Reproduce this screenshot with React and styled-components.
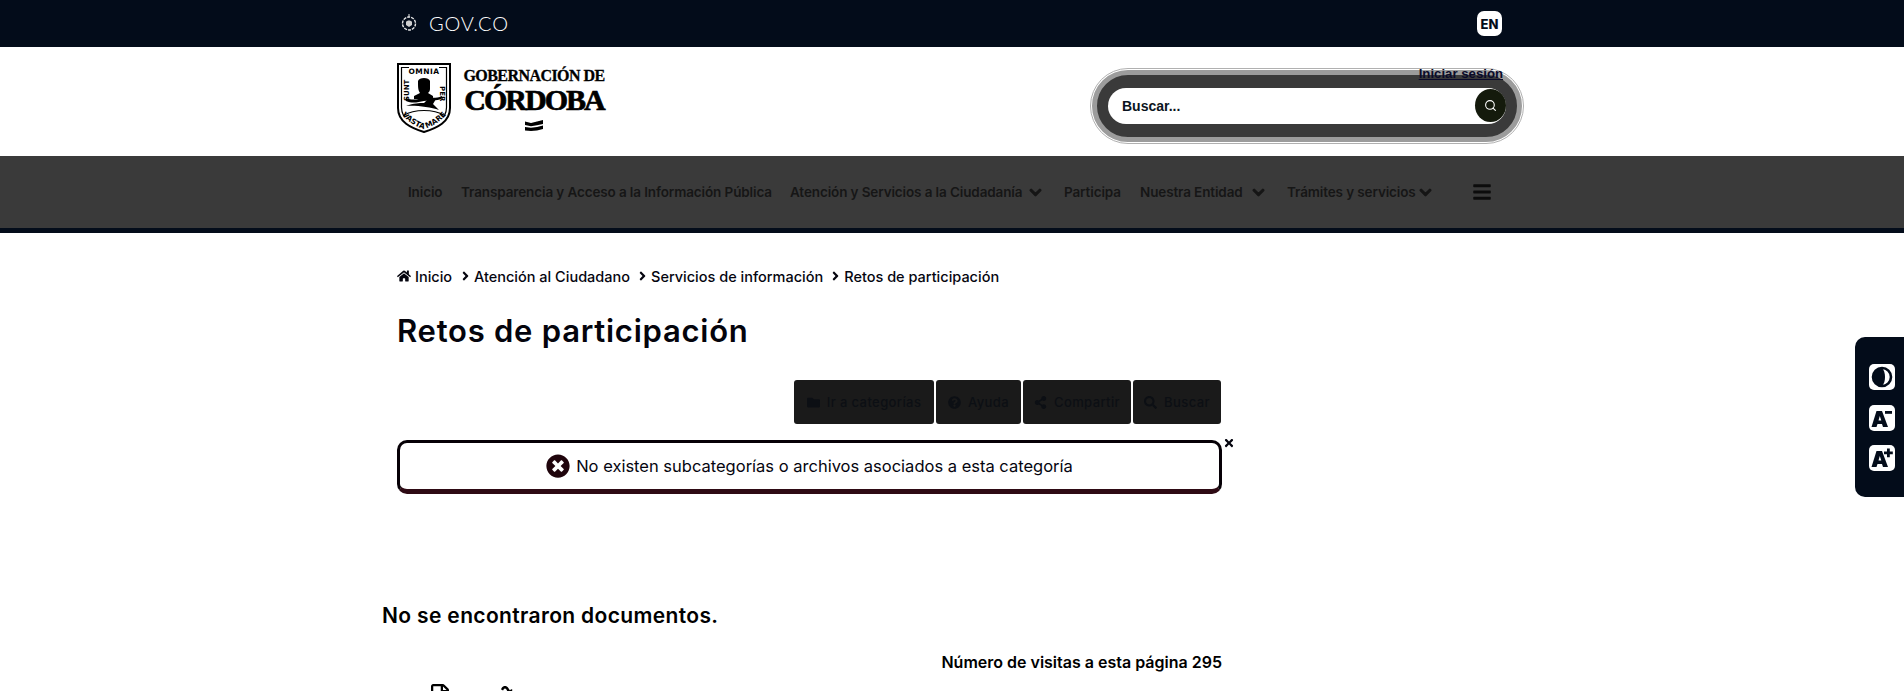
import styled, { createGlobalStyle } from "styled-components"
import { FaChevronDown, FaBars, FaHome, FaFolder, FaQuestionCircle, FaShareAlt, FaSearch, FaTimes, FaTimesCircle, FaRegFile, FaRecycle, FaAngleRight } from "react-icons/fa"
import { FiSearch } from "react-icons/fi"

const NavItems = [
    { label: "Inicio", w: 35 },
    { label: "Transparencia y Acceso a la Información Pública", w: 311 },
    { label: "Atención y Servicios a la Ciudadanía", w: 233, caret: true },
    { label: "Participa", w: 58 },
    { label: "Nuestra Entidad", w: 106, caret: true },
    { label: "Trámites y servicios", w: 126, caret: true },
]

const Crumbs = ["Atención al Ciudadano", "Servicios de información", "Retos de participación"]

const Actions = [
    { label: "Ir a categorías", icon: <FaFolder />, w: 140 },
    { label: "Ayuda", icon: <FaQuestionCircle />, w: 85 },
    { label: "Compartir", icon: <FaShareAlt />, w: 108 },
    { label: "Buscar", icon: <FaSearch />, w: 88 },
]

export default function App() {
    return (
        <>
            <GlobalStyle />
            <TopBar>
                <Wrap>
                    <GovLogo>
                        <svg width="16" height="18" viewBox="0 0 16 18" fill="none" stroke="#e8e8e8">
                            <circle cx="8" cy="9.5" r="6.5" strokeWidth="1.4" strokeDasharray="3 1" />
                            <path d="M5 8c1-2 5-2 6 0v3l-3 2-3-2z" fill="#cfcfcf" stroke="none" />
                            <path d="M8 0v3" strokeWidth="1" />
                        </svg>
                        <GovText>GOV.CO</GovText>
                    </GovLogo>
                    <LangButton>EN</LangButton>
                </Wrap>
            </TopBar>

            <Header>
                <Wrap>
                    <Brand>
                        <Shield />
                        <BrandText>
                            <BrandSmall>GOBERNACIÓN DE</BrandSmall>
                            <BrandBig>CÓRDOBA</BrandBig>
                            <BrandWave viewBox="0 0 18 11">
                                <path d="M0 1.500 L6 3 L12 1.500 L18 0 V4 L12 5.200 L6 6.200 L0 5 Z" />
                                <path d="M0 7 L6 7.800 L12 7 L18 5.600 V9 L12 10.400 L6 11 L0 10.400 Z" />
                            </BrandWave>
                        </BrandText>
                    </Brand>
                    <SearchArea>
                        <LoginLink>Iniciar sesión</LoginLink>
                        <SearchPill>
                            <SearchField>
                                <span>Buscar...</span>
                                <SearchButton><FiSearch /></SearchButton>
                            </SearchField>
                        </SearchPill>
                    </SearchArea>
                </Wrap>
            </Header>

            <Nav>
                <NavInner>
                    {NavItems.map((n, i) =>
                        <NavItem key={i} $caret={n.caret}>
                            <NavLabel $w={n.w}>{n.label}</NavLabel>
                            {n.caret && <FaChevronDown />}
                        </NavItem>)}
                    <Burger><FaBars /></Burger>
                </NavInner>
            </Nav>

            <Main>
                <Breadcrumb>
                    <FaHome />
                    <CrumbHome>Inicio</CrumbHome>
                    {Crumbs.map((c, i) =>
                        <Crumb key={i}>
                            <FaAngleRight />
                            {c}
                        </Crumb>)}
                </Breadcrumb>
                <Title>Retos de participación</Title>
                <Column>
                    <ActionRow>
                        {Actions.map((a, i) =>
                            <ActionButton key={i} $w={a.w}>{a.icon}{a.label}</ActionButton>)}
                    </ActionRow>
                    <Alert>
                        <AlertIcon><FaTimesCircle /></AlertIcon>
                        No existen subcategorías o archivos asociados a esta categoría
                        <AlertClose><FaTimes /></AlertClose>
                    </Alert>
                </Column>
                <Empty>No se encontraron documentos.</Empty>
                <Visits>Número de visitas a esta página 295</Visits>
                <FootIcons>
                    <FaRegFile />
                    <FaRecycle />
                </FootIcons>
            </Main>

            <SideRail>
                <RailButton>
                    <svg width="22" height="22" viewBox="0 0 22 22">
                        <circle cx="11" cy="11" r="9" fill="none" stroke="#030c1a" strokeWidth="2.600" />
                        <path d="M11 2a9 9 0 0 0 0 18c2-2 3-5 3-9s-1-7-3-9z" fill="#030c1a" />
                    </svg>
                </RailButton>
                <RailButton>
                    <svg width="24" height="22" viewBox="0 0 24 22" fill="#030c1a">
                        <path d="M6.500 4h5.500l6 16h-5l-1-3H7.500l-1 3H1.500zM8.500 13.500h2.800L9.800 9z" />
                        <rect x="15" y="4" width="7" height="2.800" />
                    </svg>
                </RailButton>
                <RailButton>
                    <svg width="24" height="22" viewBox="0 0 24 22" fill="#030c1a">
                        <path d="M6.500 4h5.500l6 16h-5l-1-3H7.500l-1 3H1.500zM8.500 13.500h2.800L9.800 9z" />
                        <path d="M17 1.500h2.800v3h3v2.800h-3v3H17v-3h-3V4.500h3z" />
                    </svg>
                </RailButton>
            </SideRail>
        </>
    )
}

function Shield() {
    return (
        <ShieldSvg viewBox="0 0 54 70">
            <path d="M1 1h52v44c0 14-13 20-26 24C14 65 1 59 1 45z" fill="#fff" stroke="#000" strokeWidth="2" />
            <path d="M4.500 4.500h45v40c0 3-1 6-2 8-5-3-12-5-20.500-5S11.500 49.500 6.500 52.500c-1-2-2-5-2-8z" fill="#fff" stroke="#000" strokeWidth="1.200" />
            <rect x="12" y="3" width="30" height="10" fill="#fff" />
            <text x="27" y="10.500" fontFamily="'DejaVu Sans', sans-serif" fontWeight="700" fontSize="7.500" letterSpacing="0.5" textAnchor="middle">OMNIA</text>
            <text x="0" y="0" transform="translate(11.500 38) rotate(-90)" fontFamily="'DejaVu Sans', sans-serif" fontWeight="700" fontSize="7">SUNT</text>
            <text x="0" y="0" transform="translate(42.500 23) rotate(90)" fontFamily="'DejaVu Sans', sans-serif" fontWeight="700" fontSize="7">PER</text>
            <path d="M21 18c1-4 11-4 12 0v8c0 2-1 3-2 4l5 3v3H17v-3l6-3c-2-3-2-6-2-12z" />
            <path d="M9 35c7 3 12 1 18 0s12 1 18-2v2.500c-6 3-12 1.500-18 2.500s-11 3-18 0z" />
            <path d="M9 43c8-3 13-3 18-3l5-5 7 1-3 5 6 6c-9-3-24-5-33-4z" />
            <path id="shield-arc" d="M4 51C12 60 20 64 27 66 34 64 42 60 50 51" fill="none" />
            <text fontFamily="'DejaVu Sans', sans-serif" fontWeight="700" fontSize="7.500">
                <textPath href="#shield-arc" startOffset="50%" textAnchor="middle">VASTA MARE</textPath>
            </text>
        </ShieldSvg>
    )
}

const GlobalStyle = createGlobalStyle`
    html, body { margin: 0; padding: 0; background: #fff; overflow: hidden; }
    body { font-family: "Inter", "Liberation Sans", sans-serif; color: #000; height: 691px; }
    * { box-sizing: border-box; }
`

const Wrap = styled.div`
    width: 1140px;
    margin: 0 auto;
    padding: 0 15px;
    display: flex;
    align-items: center;
    justify-content: space-between;
    position: relative;
    height: 100%;
`

const TopBar = styled.div`
    height: 47px;
    background: #030c1a;
`

const GovLogo = styled.div`
    display: flex;
    align-items: center;
    gap: 12px;
    padding: 0 0 2px 4px;
`

const GovText = styled.span`
    font-family: "Lato", sans-serif;
    font-weight: 300;
    font-size: 20px;
    letter-spacing: 0.8px;
    color: #fff;
`

const LangButton = styled.div`
    width: 25px;
    height: 25px;
    margin-right: 5px;
    background: #fff;
    border-radius: 7px;
    display: flex;
    align-items: center;
    justify-content: center;
    font-size: 13px;
    font-weight: 800;
    color: #030c1a;
`

const Header = styled.div`
    height: 109px;
    background: #fff;
`

const Brand = styled.div`
    display: flex;
    gap: 13px;
    align-self: flex-start;
    padding-top: 16px;
`

const ShieldSvg = styled.svg`
    width: 54px;
    height: 70px;
    display: block;
`

const BrandText = styled.div`
    width: 140px;
    display: flex;
    flex-direction: column;
    align-items: center;
    padding-top: 5px;
`

const BrandSmall = styled.div`
    font-family: "Liberation Serif", serif;
    font-weight: 700;
    font-size: 16px;
    line-height: 16px;
    letter-spacing: -0.55px;
    white-space: nowrap;
    -webkit-text-stroke: 0.3px #000;
`

const BrandBig = styled.div`
    font-family: "Liberation Serif", serif;
    font-weight: 700;
    font-size: 30px;
    line-height: 32px;
    letter-spacing: -2px;
    white-space: nowrap;
    -webkit-text-stroke: 0.7px #000;
`

const BrandWave = styled.svg`
    width: 18px;
    height: 11px;
    margin-top: 4px;
`

const SearchArea = styled.div`
    position: relative;
    margin-right: -15px;
    margin-top: 8px;
`

const LoginLink = styled.a`
    position: absolute;
    top: -4px;
    right: 19px;
    z-index: 1;
    font-family: "Liberation Sans", sans-serif;
    font-size: 13.2px;
    font-weight: 700;
    color: #0a0a2a;
    text-decoration: underline;
`

const SearchPill = styled.div`
    width: 430px;
    height: 72px;
    border-radius: 36px;
    background: #3a3a3a;
    border: 5px solid #9c9c9c;
    outline: 1px solid #b0b0b0;
    outline-offset: 1px;
    display: flex;
    align-items: center;
    padding: 0 11px;
`

const SearchField = styled.div`
    flex: 1;
    height: 36px;
    border-radius: 18px;
    background: #fff;
    display: flex;
    align-items: center;
    justify-content: space-between;
    padding-left: 14px;
    font-family: "Liberation Sans", sans-serif;
    font-size: 14px;
    font-weight: 700;
    color: #0b1420;
`

const SearchButton = styled.div`
    width: 31px;
    height: 33px;
    border-radius: 50%;
    background: #141a0c;
    color: #fff;
    font-size: 13px;
    display: flex;
    align-items: center;
    justify-content: center;
`

const Nav = styled.div`
    height: 77px;
    background: #3a3a3a;
    border-bottom: 5px solid #030c1a;
`

const NavInner = styled.div`
    width: 1140px;
    height: 100%;
    margin: 0 auto;
    padding-left: 26px;
    display: flex;
    align-items: center;
    gap: 18px;
`

const NavItem = styled.div`
    display: flex;
    align-items: center;
    gap: 6px;
    margin-right: ${props => props.$caret ? 4 : 0}px;
    color: #161616;
    svg { width: 13px; height: 13px; stroke: currentColor; stroke-width: 40px; }
`

const NavLabel = styled.span`
    width: ${props => props.$w}px;
    white-space: nowrap;
    font-size: 13.5px;
    font-weight: 600;
    letter-spacing: -0.12px;
`

const Burger = styled.div`
    margin-left: 19px;
    display: flex;
    color: #0c0c0c;
    svg { width: 18px; height: 20px; }
`

const Main = styled.div`
    width: 1140px;
    margin: 0 auto;
    padding: 0 15px;
`

const Breadcrumb = styled.div`
    display: flex;
    align-items: center;
    height: 20px;
    margin-top: 33px;
    font-size: 14.5px;
    font-weight: 500;
    color: #05050f;
    svg { flex: none; }
    > svg { width: 14px; height: 14px; margin-right: 4px; }
`

const CrumbHome = styled.span`
    width: 38px;
`

const Crumb = styled.span`
    display: flex;
    align-items: center;
    white-space: nowrap;
    margin-left: 7px;
    gap: 3px;
    svg { width: 11px; height: 14px; }
`

const Title = styled.h1`
    margin: 25px 0 0;
    font-size: 31px;
    line-height: 40px;
    font-weight: 600;
    letter-spacing: 0.75px;
    color: #04040c;
`

const Column = styled.div`
    width: 825px;
`

const ActionRow = styled.div`
    display: flex;
    justify-content: flex-end;
    gap: 2px;
    margin-top: 29px;
    padding-right: 1px;
`

const ActionButton = styled.div`
    width: ${props => props.$w}px;
    height: 44px;
    border-radius: 3px;
    background: #1a1a1a;
    color: #0c0f14;
    display: flex;
    align-items: center;
    justify-content: center;
    gap: 7px;
    font-size: 13px;
    font-weight: 500;
    letter-spacing: 0.4px;
    svg { width: 13px; height: 13px; }
`

const Alert = styled.div`
    position: relative;
    height: 54px;
    margin-top: 16px;
    background: #fff;
    border: 3px solid #060006;
    border-bottom: 5px solid #2e0a14;
    border-radius: 10px;
    display: flex;
    align-items: center;
    justify-content: center;
    gap: 6px;
    font-size: 16.5px;
    font-weight: 400;
    color: #05050f;
`

const AlertIcon = styled.span`
    display: flex;
    color: #1f040c;
    svg { width: 24px; height: 24px; }
`

const AlertClose = styled.span`
    position: absolute;
    top: -6px;
    right: -16px;
    display: flex;
    svg { width: 12px; height: 12px; }
`

const Empty = styled.div`
    width: 400px;
    margin: 109px 0 0 -15px;
    font-size: 21px;
    line-height: 26px;
    font-weight: 600;
    letter-spacing: 0.35px;
`

const Visits = styled.div`
    width: 825px;
    margin-top: 23px;
    text-align: right;
    font-size: 16px;
    line-height: 20px;
    font-weight: 600;
`

const FootIcons = styled.div`
    display: flex;
    gap: 45px;
    margin: 12px 0 0 33px;
    svg { width: 20px; height: 24px; }
`

const SideRail = styled.div`
    position: fixed;
    top: 337px;
    right: 0;
    width: 49px;
    height: 160px;
    background: #030c1a;
    border-radius: 10px 0 0 10px;
    padding: 27px 0 0 14px;
    display: flex;
    flex-direction: column;
    gap: 14.5px;
`

const RailButton = styled.div`
    width: 26px;
    height: 26px;
    border-radius: 5px;
    background: #fff;
    display: flex;
    align-items: center;
    justify-content: center;
`
